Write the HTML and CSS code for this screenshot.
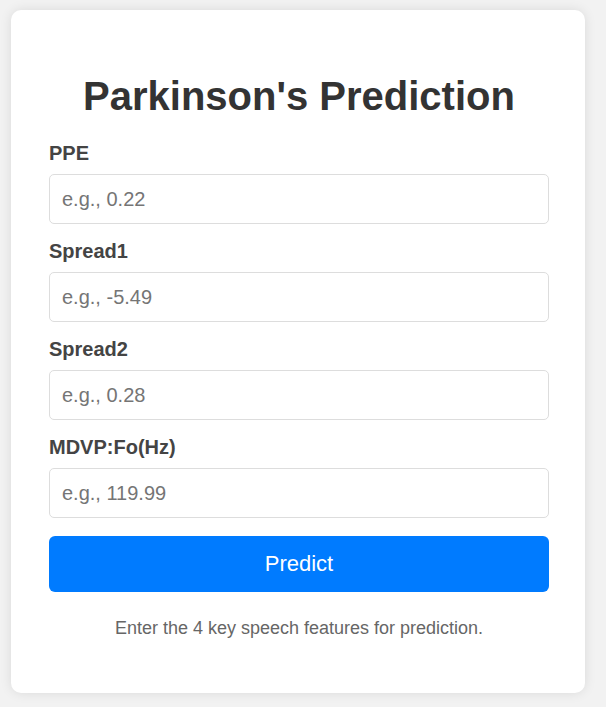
FILE: index.html
```html
<!DOCTYPE html>
<html lang="en">
<head>
<meta charset="utf-8">
<title>Parkinson's Prediction</title>
<link rel="stylesheet" href="styles.css">
</head>
<body>
<div class="card">
  <h1 class="title">Parkinson's Prediction</h1>
  <form class="form">
    <label class="label" for="ppe">PPE</label>
    <input class="input" id="ppe" type="text" placeholder="e.g., 0.22">
    <label class="label" for="spread1">Spread1</label>
    <input class="input" id="spread1" type="text" placeholder="e.g., -5.49">
    <label class="label" for="spread2">Spread2</label>
    <input class="input" id="spread2" type="text" placeholder="e.g., 0.28">
    <label class="label" for="fo">MDVP:Fo(Hz)</label>
    <input class="input" id="fo" type="text" placeholder="e.g., 119.99">
    <button class="button" type="button">Predict</button>
  </form>
  <p class="note">Enter the 4 key speech features for prediction.</p>
</div>
</body>
</html>
```

FILE: styles.css
```css
* { box-sizing: border-box; }
html, body { margin: 0; }
body {
  background: #f2f2f2;
  font-family: "Liberation Sans", Arial, sans-serif;
  padding: 10px 0 14px 11px;
}
.card {
  width: 574px;
  background: #ffffff;
  border-radius: 10px;
  box-shadow: 0 0 12px rgba(0, 0, 0, 0.1);
  padding: 63px 36px 54px 38px;
}
.title {
  margin: 0 0 23px;
  font-size: 40px;
  line-height: 46px;
  font-weight: bold;
  color: #333333;
  text-align: center;
}
.form {
  display: flex;
  flex-direction: column;
}
.label {
  font-size: 20px;
  line-height: 23px;
  font-weight: bold;
  color: #444444;
  margin-bottom: 9px;
}
.input {
  width: 500px;
  height: 50px;
  border: 1px solid #dddddd;
  border-radius: 5px;
  padding: 0 12px;
  font-family: "Liberation Sans", Arial, sans-serif;
  font-size: 20px;
  color: #333333;
  margin: 0 0 16px;
  outline: none;
}
.input::placeholder { color: #757575; }
.input:last-of-type { margin-bottom: 18px; }
.button {
  width: 500px;
  height: 56px;
  border: none;
  border-radius: 6px;
  background: #007bff;
  color: #ffffff;
  font-family: "Liberation Sans", Arial, sans-serif;
  font-size: 22px;
  cursor: pointer;
}
.note {
  margin: 26px 0 0;
  font-size: 18px;
  line-height: 21px;
  color: #666666;
  text-align: center;
}
```
